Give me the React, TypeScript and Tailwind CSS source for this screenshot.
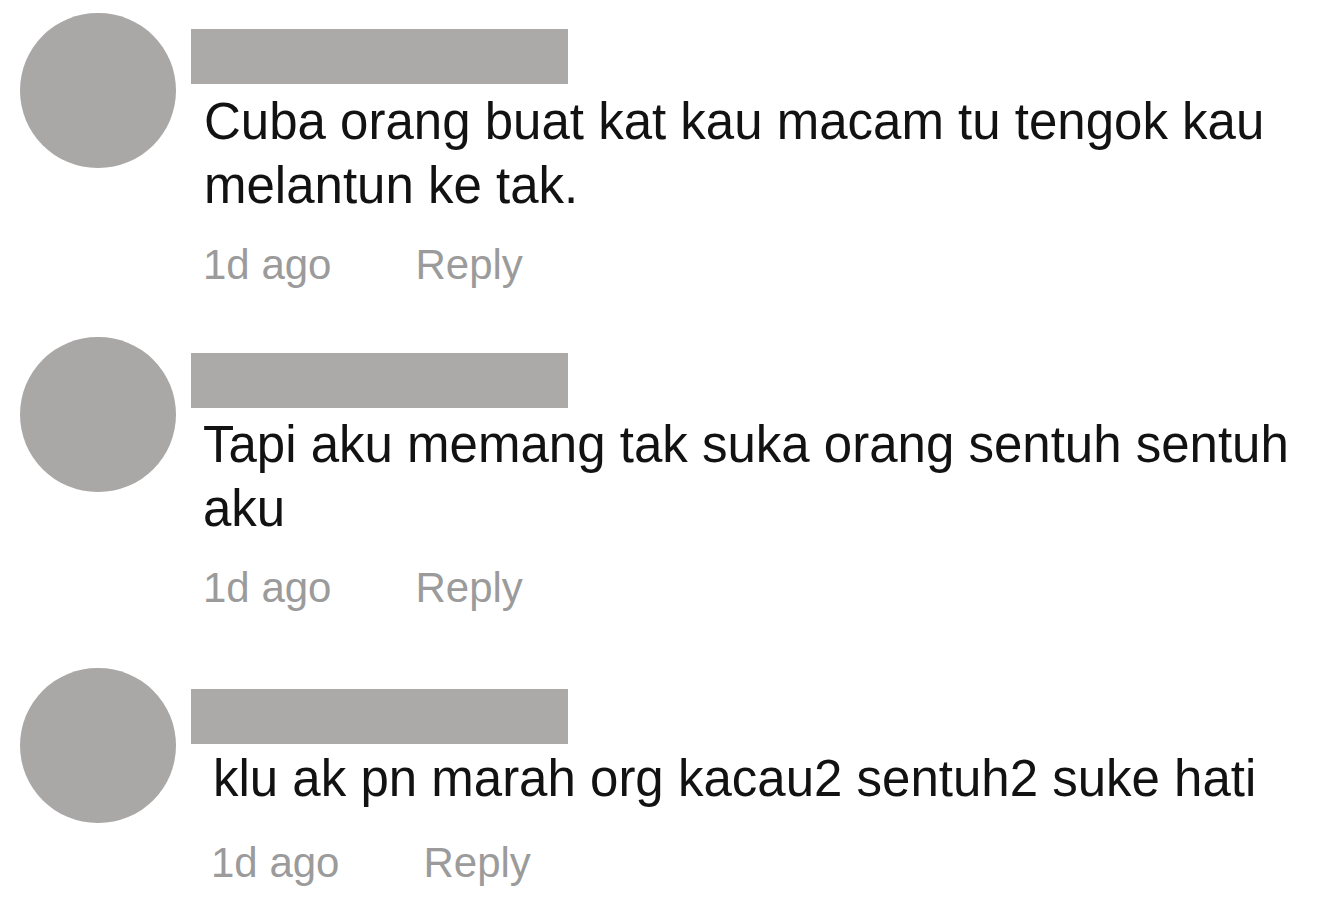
import React from "react";

type C = {
  text: string;
  row: string;
  pt: string;
  textCls: string;
  metaCls: string;
};

const comments: C[] = [
  {
    text: "Cuba orang buat kat kau macam tu tengok kau melantun ke tak.",
    row: "mt-[13px]",
    pt: "pt-[16px]",
    textCls: "pl-[13px] mt-[6px]",
    metaCls: "pl-[12px] mt-[23px]",
  },
  {
    text: "Tapi aku memang tak suka orang sentuh sentuh aku",
    row: "mt-[48px]",
    pt: "pt-[16px]",
    textCls: "pl-[12px] mt-[5px]",
    metaCls: "pl-[12px] mt-[23px]",
  },
  {
    text: "klu ak pn marah org kacau2 sentuh2 suke hati",
    row: "mt-[56px]",
    pt: "pt-[21px]",
    textCls: "pl-[22px] mt-[3px]",
    metaCls: "pl-[20px] mt-[28px]",
  },
];

export default function App() {
  return (
    <div
      className="w-[1337px] h-[919px] bg-white overflow-hidden"
      style={{ fontFamily: "Arial, 'Liberation Sans', sans-serif" }}
    >
      {comments.map((c, i) => (
        <div key={i} className={`flex items-start ${c.row}`}>
          <div className="ml-[20px] w-[156px] h-[155px] rounded-full bg-[#aaa7a7] shrink-0" />
          <div className={`ml-[15px] ${c.pt} w-[1140px]`}>
            <div className="w-[377px] h-[55px] bg-[#aca9a9]" />
            <div className={`${c.textCls} text-[51px] leading-[64px] text-[#121212] pr-[40px]`}>
              {c.text}
            </div>
            <div className={`${c.metaCls} flex gap-[84px] text-[42px] leading-[48px] text-[#9b9b9b]`}>
              <span>1d ago</span>
              <span>Reply</span>
            </div>
          </div>
        </div>
      ))}
    </div>
  );
}
